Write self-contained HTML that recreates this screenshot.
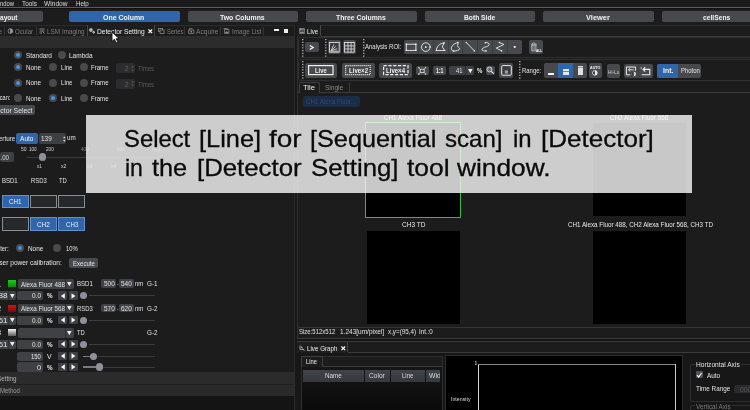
<!DOCTYPE html>
<html><head><meta charset="utf-8"><title>Detector Setting</title>
<style>
html,body{margin:0;padding:0;background:#1c1c1c;}
body{width:750px;height:410px;overflow:hidden;position:relative;font-family:"Liberation Sans",sans-serif;font-size:7px;color:#e4e4e4;}
#root{position:absolute;left:0;top:0;width:750px;height:410px;overflow:hidden;filter:blur(0.4px);will-change:transform;}
.a{position:absolute;}
.t{position:absolute;white-space:nowrap;line-height:10px;height:10px;transform-origin:0 50%;display:block;}
svg{display:block;overflow:visible;}
</style></head><body><div id="root">
<div class="a" style="left:0.00px;top:0.00px;width:750.00px;height:8.00px;background:#1b1b1b;"></div>
<span class="t" style="left:-7.13px;top:-1.17px;font-size:8.0px;color:#dcdcdc;transform:scaleX(0.7425);">Window</span>
<span class="t" style="left:22.00px;top:-1.17px;font-size:8.0px;color:#dcdcdc;transform:scaleX(0.8032);">Tools</span>
<span class="t" style="left:44.30px;top:-1.17px;font-size:8.0px;color:#dcdcdc;transform:scaleX(0.8259);">Window</span>
<span class="t" style="left:75.80px;top:-1.17px;font-size:8.0px;color:#dcdcdc;transform:scaleX(0.7780);">Help</span>
<div class="a" style="left:0.00px;top:7.30px;width:750.00px;height:1.10px;background:#5a5a5a;"></div>
<div class="a" style="left:0.00px;top:8.40px;width:750.00px;height:1.00px;background:#101010;"></div>
<div class="a" style="left:-40.00px;top:11.20px;width:83.20px;height:11.00px;background:#47494d;border-radius:2px;"></div>
<span class="t" style="left:0.00px;top:13.07px;font-size:7.3px;color:#f2f2f2;transform:scaleX(0.8941);font-weight:bold;">ayout</span>
<div class="a" style="left:69.00px;top:11.20px;width:111.00px;height:11.00px;background:#2f66ab;border-radius:2px;"></div>
<span class="t" style="left:103.00px;top:13.07px;font-size:7.3px;color:#f2f2f2;transform:scaleX(0.9522);font-weight:bold;">One Column</span>
<div class="a" style="left:187.50px;top:11.20px;width:110.80px;height:11.00px;background:#47494d;border-radius:2px;"></div>
<span class="t" style="left:220.40px;top:13.07px;font-size:7.3px;color:#f2f2f2;transform:scaleX(0.9452);font-weight:bold;">Two Columns</span>
<div class="a" style="left:306.00px;top:11.20px;width:111.00px;height:11.00px;background:#47494d;border-radius:2px;"></div>
<span class="t" style="left:336.30px;top:13.07px;font-size:7.3px;color:#f2f2f2;transform:scaleX(0.9357);font-weight:bold;">Three Columns</span>
<div class="a" style="left:424.50px;top:11.20px;width:110.80px;height:11.00px;background:#47494d;border-radius:2px;"></div>
<span class="t" style="left:463.90px;top:13.07px;font-size:7.3px;color:#f2f2f2;transform:scaleX(0.9163);font-weight:bold;">Both Side</span>
<div class="a" style="left:543.00px;top:11.20px;width:111.00px;height:11.00px;background:#47494d;border-radius:2px;"></div>
<span class="t" style="left:586.10px;top:13.07px;font-size:7.3px;color:#f2f2f2;transform:scaleX(1.0216);font-weight:bold;">Viewer</span>
<div class="a" style="left:661.50px;top:11.20px;width:110.50px;height:11.00px;background:#47494d;border-radius:2px;"></div>
<span class="t" style="left:703.40px;top:13.07px;font-size:7.3px;color:#f2f2f2;transform:scaleX(0.9186);font-weight:bold;">cellSens</span>
<div class="a" style="left:0.00px;top:24.60px;width:294.00px;height:0.80px;background:#2b2b2b;"></div>
<div class="a" style="left:0.00px;top:35.80px;width:293.60px;height:12.20px;background:#2c2c2c;"></div>
<div class="a" style="left:293.60px;top:25.00px;width:0.80px;height:385.00px;background:#161616;"></div>
<div class="a" style="left:294.40px;top:25.00px;width:1.00px;height:385.00px;background:#2c2c2c;"></div>
<div class="a" style="left:295.40px;top:25.00px;width:1.40px;height:385.00px;background:#181818;"></div>
<div class="a" style="left:296.80px;top:25.00px;width:0.90px;height:385.00px;background:#303030;"></div>
<span class="t" style="left:-2.20px;top:26.77px;font-size:7px;color:#7e7e7e;transform:scaleX(1.0788);">e</span>
<div class="a" style="left:4.30px;top:26.50px;width:1.00px;height:8.50px;background:#343434;"></div>
<span class="t" style="left:15.20px;top:26.77px;font-size:7px;color:#7e7e7e;transform:scaleX(0.8779);">Ocular</span>
<div class="a" style="left:35.50px;top:26.50px;width:1.00px;height:8.50px;background:#343434;"></div>
<span class="t" style="left:47.00px;top:26.77px;font-size:7px;color:#7e7e7e;transform:scaleX(0.9117);">LSM Imaging</span>
<div class="a" style="left:87.00px;top:25.40px;width:68.20px;height:10.40px;background:#1e1e1e;border-left:1px solid #454545;border-right:1px solid #454545;box-sizing:border-box;"></div>
<span class="t" style="left:97.30px;top:26.77px;font-size:7px;color:#ececec;transform:scaleX(0.9503);">Detector Setting</span>
<svg class="a" style="left:148px;top:29.2px" width="4.6" height="4.6" viewBox="0 0 10 10"><path d="M1 1L9 9M9 1L1 9" stroke="#fff" stroke-width="2.6"/></svg>
<span class="t" style="left:166.70px;top:26.77px;font-size:7px;color:#7e7e7e;transform:scaleX(0.8316);">Series</span>
<div class="a" style="left:184.30px;top:26.50px;width:1.00px;height:8.50px;background:#343434;"></div>
<span class="t" style="left:196.00px;top:26.77px;font-size:7px;color:#7e7e7e;transform:scaleX(0.9480);">Acquire</span>
<div class="a" style="left:219.90px;top:26.50px;width:1.00px;height:8.50px;background:#343434;"></div>
<span class="t" style="left:231.50px;top:26.77px;font-size:7px;color:#7e7e7e;transform:scaleX(0.9135);">Image List</span>
<div class="a" style="left:262.50px;top:26.50px;width:1.00px;height:8.50px;background:#343434;"></div>
<div class="a" style="left:273.80px;top:29.30px;width:4.80px;height:1.60px;background:#f0f0f0;"></div>
<div class="a" style="left:284.20px;top:28.60px;width:4.30px;height:4.30px;background:#f0f0f0;"></div>
<svg class="a" style="left:7.4px;top:28px" width="6" height="6" viewBox="0 0 12 12"><path d="M7 1A5 5 0 1 0 7 11Z" fill="none" stroke="#9a9a9a" stroke-width="1.6"/><path d="M7 1A5 5 0 0 1 7 11Z" fill="#9a9a9a"/></svg>
<svg class="a" style="left:39px;top:28px" width="6" height="6" viewBox="0 0 12 12"><path d="M1 2H11M1 6H11M1 10H6M7 7L11 11" stroke="#9a9a9a" stroke-width="1.7" fill="none"/></svg>
<svg class="a" style="left:89px;top:28px" width="6.4" height="6" viewBox="0 0 13 12"><circle cx="4" cy="4" r="2.4" fill="none" stroke="#e8e8e8" stroke-width="2.2"/><circle cx="9.5" cy="8.5" r="1.7" fill="none" stroke="#e8e8e8" stroke-width="2"/></svg>
<svg class="a" style="left:158px;top:28px" width="6.6" height="6" viewBox="0 0 13 12"><rect x="1" y="1" width="8" height="6" fill="none" stroke="#8a8a8a" stroke-width="1.6"/><rect x="4" y="4" width="8" height="7" fill="#1c1c1c" stroke="#8a8a8a" stroke-width="1.6"/></svg>
<svg class="a" style="left:188px;top:28px" width="6.4" height="6" viewBox="0 0 13 12"><path d="M1 4H12V11H1ZM3 4V1H9" fill="none" stroke="#8a8a8a" stroke-width="1.6"/><circle cx="6.5" cy="7.5" r="1.8" fill="#8a8a8a"/></svg>
<svg class="a" style="left:222.8px;top:28px" width="6.4" height="6" viewBox="0 0 13 12"><path d="M1 1H9V3M3 3H12V11H3Z" fill="none" stroke="#8a8a8a" stroke-width="1.6"/><path d="M4 10L7 6L9 8L11 7V10Z" fill="#8a8a8a"/></svg>
<div class="a" style="left:14.00px;top:51.00px;width:8.20px;height:8.20px;background:#4a4a4c;border-radius:50%;"></div>
<div class="a" style="left:16.00px;top:53.00px;width:4.20px;height:4.20px;background:#3d94f2;border-radius:50%;"></div>
<span class="t" style="left:25.80px;top:50.94px;font-size:7.4px;color:#e4e4e4;transform:scaleX(0.8635);">Standard</span>
<div class="a" style="left:57.60px;top:51.00px;width:8.20px;height:8.20px;background:#4a4a4c;border-radius:50%;"></div>
<span class="t" style="left:69.10px;top:50.94px;font-size:7.4px;color:#e4e4e4;transform:scaleX(0.8799);">Lambda</span>
<div class="a" style="left:14.00px;top:63.00px;width:8.20px;height:8.20px;background:#4a4a4c;border-radius:50%;"></div>
<div class="a" style="left:16.00px;top:65.00px;width:4.20px;height:4.20px;background:#3d94f2;border-radius:50%;"></div>
<span class="t" style="left:25.80px;top:62.94px;font-size:7.4px;color:#e4e4e4;transform:scaleX(0.8546);">None</span>
<div class="a" style="left:48.90px;top:63.00px;width:8.20px;height:8.20px;background:#4a4a4c;border-radius:50%;"></div>
<span class="t" style="left:60.70px;top:62.94px;font-size:7.4px;color:#e4e4e4;transform:scaleX(0.8230);">Line</span>
<div class="a" style="left:79.80px;top:63.00px;width:8.20px;height:8.20px;background:#4a4a4c;border-radius:50%;"></div>
<span class="t" style="left:91.40px;top:62.94px;font-size:7.4px;color:#e4e4e4;transform:scaleX(0.8196);">Frame</span>
<div class="a" style="left:116.00px;top:63.10px;width:19.30px;height:10.00px;background:#2c2c2e;border-radius:1.5px;"></div>
<span class="t" style="left:125.00px;top:64.14px;font-size:7.4px;color:#666;transform:scaleX(0.8758);">2</span>
<svg class="a" style="left:131.3px;top:64.8px" width="3" height="7" viewBox="0 0 6 14"><path d="M0 5L3 1L6 5ZM0 9L3 13L6 9Z" fill="#555"/></svg>
<span class="t" style="left:138.00px;top:64.14px;font-size:7.4px;color:#5a5a5a;transform:scaleX(0.8063);">Times</span>
<div class="a" style="left:14.00px;top:78.50px;width:8.20px;height:8.20px;background:#4a4a4c;border-radius:50%;"></div>
<div class="a" style="left:16.00px;top:80.50px;width:4.20px;height:4.20px;background:#3d94f2;border-radius:50%;"></div>
<span class="t" style="left:25.80px;top:78.44px;font-size:7.4px;color:#e4e4e4;transform:scaleX(0.8546);">None</span>
<div class="a" style="left:48.90px;top:78.50px;width:8.20px;height:8.20px;background:#4a4a4c;border-radius:50%;"></div>
<span class="t" style="left:60.70px;top:78.44px;font-size:7.4px;color:#e4e4e4;transform:scaleX(0.8230);">Line</span>
<div class="a" style="left:79.80px;top:78.50px;width:8.20px;height:8.20px;background:#4a4a4c;border-radius:50%;"></div>
<span class="t" style="left:91.40px;top:78.44px;font-size:7.4px;color:#e4e4e4;transform:scaleX(0.8196);">Frame</span>
<div class="a" style="left:116.00px;top:78.60px;width:19.30px;height:10.00px;background:#2c2c2e;border-radius:1.5px;"></div>
<span class="t" style="left:125.00px;top:79.64px;font-size:7.4px;color:#666;transform:scaleX(0.8758);">2</span>
<svg class="a" style="left:131.3px;top:80.3px" width="3" height="7" viewBox="0 0 6 14"><path d="M0 5L3 1L6 5ZM0 9L3 13L6 9Z" fill="#555"/></svg>
<span class="t" style="left:138.00px;top:79.64px;font-size:7.4px;color:#5a5a5a;transform:scaleX(0.8063);">Times</span>
<div class="a" style="left:14.00px;top:93.70px;width:8.20px;height:8.20px;background:#4a4a4c;border-radius:50%;"></div>
<span class="t" style="left:25.80px;top:93.64px;font-size:7.4px;color:#e4e4e4;transform:scaleX(0.8546);">None</span>
<div class="a" style="left:48.90px;top:93.70px;width:8.20px;height:8.20px;background:#4a4a4c;border-radius:50%;"></div>
<div class="a" style="left:50.90px;top:95.70px;width:4.20px;height:4.20px;background:#3d94f2;border-radius:50%;"></div>
<span class="t" style="left:60.70px;top:93.64px;font-size:7.4px;color:#e4e4e4;transform:scaleX(0.8230);">Line</span>
<div class="a" style="left:79.80px;top:93.70px;width:8.20px;height:8.20px;background:#4a4a4c;border-radius:50%;"></div>
<span class="t" style="left:91.40px;top:93.64px;font-size:7.4px;color:#e4e4e4;transform:scaleX(0.8196);">Frame</span>
<span class="t" style="left:-4.40px;top:93.34px;font-size:7.4px;color:#e4e4e4;transform:scaleX(0.7619);">Scan:</span>
<div class="a" style="left:-10.00px;top:104.70px;width:45.20px;height:10.20px;background:#47494d;border-radius:2px;"></div>
<span class="t" style="left:-14.50px;top:105.74px;font-size:7.4px;color:#e4e4e4;transform:scaleX(0.9203);">Detector Select</span>
<span class="t" style="left:-9.40px;top:133.74px;font-size:7.4px;color:#e4e4e4;transform:scaleX(0.8608);">Aperture</span>
<div class="a" style="left:16.40px;top:133.30px;width:21.20px;height:10.70px;background:#2f66ab;border-radius:2px;"></div>
<span class="t" style="left:20.10px;top:134.14px;font-size:7.4px;color:#f4f4f4;transform:scaleX(0.8879);">Auto</span>
<div class="a" style="left:38.70px;top:133.30px;width:27.70px;height:10.70px;background:#3d3f43;border-radius:2px;"></div>
<span class="t" style="left:41.00px;top:134.34px;font-size:7.4px;color:#e4e4e4;transform:scaleX(0.8677);">139</span>
<svg class="a" style="left:63.2px;top:135.6px" width="2.6" height="6.4" viewBox="0 0 6 14"><path d="M0 5L3 1L6 5ZM0 9L3 13L6 9Z" fill="#e8e8e8"/></svg>
<span class="t" style="left:67.10px;top:133.04px;font-size:7.4px;color:#e4e4e4;transform:scaleX(0.8474);">um</span>
<span class="t" style="left:21.20px;top:144.00px;font-size:5.2px;color:#d8d8d8;transform:scaleX(0.9705);">50</span>
<span class="t" style="left:29.30px;top:144.00px;font-size:5.2px;color:#d8d8d8;transform:scaleX(0.8781);">100</span>
<span class="t" style="left:46.30px;top:144.00px;font-size:5.2px;color:#d8d8d8;transform:scaleX(0.8897);">200</span>
<span class="t" style="left:81.20px;top:144.00px;font-size:5.2px;color:#8a8a8a;transform:scaleX(0.9012);">400</span>
<span class="t" style="left:116.50px;top:144.00px;font-size:5.2px;color:#8a8a8a;transform:scaleX(0.9012);">600</span>
<span class="t" style="left:151.50px;top:144.00px;font-size:5.2px;color:#8a8a8a;transform:scaleX(0.9012);">800</span>
<div class="a" style="left:0.00px;top:152.00px;width:13.80px;height:9.70px;background:#3d3f43;border-radius:2px;"></div>
<span class="t" style="left:-2.60px;top:152.54px;font-size:7.4px;color:#d8d8d8;transform:scaleX(0.8342);">1.00</span>
<div class="a" style="left:26.80px;top:156.50px;width:135.20px;height:1.00px;background:#3a3a3a;"></div>
<div class="a" style="left:39.00px;top:153.20px;width:7.40px;height:7.40px;background:#8f9198;border-radius:50%;"></div>
<span class="t" style="left:36.90px;top:161.30px;font-size:5.2px;color:#d8d8d8;transform:scaleX(0.8579);">x1</span>
<span class="t" style="left:61.00px;top:161.30px;font-size:5.2px;color:#d8d8d8;transform:scaleX(0.9856);">x2</span>
<span class="t" style="left:86.60px;top:161.30px;font-size:5.2px;color:#8a8a8a;transform:scaleX(0.9856);">x3</span>
<span class="t" style="left:111.00px;top:161.30px;font-size:5.2px;color:#8a8a8a;transform:scaleX(0.9856);">x4</span>
<span class="t" style="left:2.00px;top:176.34px;font-size:7.4px;color:#e4e4e4;transform:scaleX(0.8132);">BSD1</span>
<span class="t" style="left:30.60px;top:176.34px;font-size:7.4px;color:#e4e4e4;transform:scaleX(0.7964);">RSD3</span>
<span class="t" style="left:59.00px;top:176.34px;font-size:7.4px;color:#e4e4e4;transform:scaleX(0.7918);">TD</span>
<div class="a" style="left:2.00px;top:194.80px;width:26.50px;height:13.40px;background:#2f66ab;box-sizing:border-box;border:1px solid #6390cb;"></div>
<span class="t" style="left:8.70px;top:197.24px;font-size:7.4px;color:#e8f0fb;transform:scaleX(0.8455);">CH1</span>
<div class="a" style="left:30.00px;top:194.80px;width:26.50px;height:13.40px;background:#26292c;box-sizing:border-box;border:1px solid #8c8c8c;"></div>
<div class="a" style="left:58.40px;top:194.80px;width:26.50px;height:13.40px;background:#26292c;box-sizing:border-box;border:1px solid #8c8c8c;"></div>
<div class="a" style="left:2.00px;top:217.40px;width:26.50px;height:13.40px;background:#26292c;box-sizing:border-box;border:1px solid #8c8c8c;"></div>
<div class="a" style="left:30.00px;top:217.40px;width:26.50px;height:13.40px;background:#2f66ab;box-sizing:border-box;border:1px solid #6390cb;"></div>
<span class="t" style="left:37.30px;top:219.84px;font-size:7.4px;color:#e8f0fb;transform:scaleX(0.8590);">CH2</span>
<div class="a" style="left:58.40px;top:217.40px;width:26.50px;height:13.40px;background:#2f66ab;box-sizing:border-box;border:1px solid #6390cb;"></div>
<span class="t" style="left:65.80px;top:219.84px;font-size:7.4px;color:#e8f0fb;transform:scaleX(0.8319);">CH3</span>
<span class="t" style="left:-6.00px;top:244.14px;font-size:7.4px;color:#e4e4e4;transform:scaleX(0.7956);">Filter:</span>
<div class="a" style="left:16.00px;top:244.30px;width:8.20px;height:8.20px;background:#4a4a4c;border-radius:50%;"></div>
<div class="a" style="left:18.00px;top:246.30px;width:4.20px;height:4.20px;background:#3d94f2;border-radius:50%;"></div>
<span class="t" style="left:27.90px;top:244.24px;font-size:7.4px;color:#e4e4e4;transform:scaleX(0.8660);">None</span>
<div class="a" style="left:53.30px;top:244.30px;width:8.20px;height:8.20px;background:#4a4a4c;border-radius:50%;"></div>
<span class="t" style="left:65.50px;top:244.24px;font-size:7.4px;color:#e4e4e4;transform:scaleX(0.7910);">10%</span>
<span class="t" style="left:-7.80px;top:258.34px;font-size:7.4px;color:#e4e4e4;transform:scaleX(0.8896);">Laser power calibration:</span>
<div class="a" style="left:69.10px;top:257.80px;width:29.20px;height:10.40px;background:#47494d;border-radius:2px;"></div>
<span class="t" style="left:73.20px;top:258.74px;font-size:7.4px;color:#e4e4e4;transform:scaleX(0.8163);">Execute</span>
<span class="t" style="left:-3.00px;top:279.74px;font-size:7.4px;color:#e4e4e4;transform:scaleX(1.0218);">1</span>
<div class="a" style="left:8.10px;top:280.00px;width:7.70px;height:7.20px;background:linear-gradient(#18d018,#0a8a0a);"></div>
<div class="a" style="left:18.10px;top:279.00px;width:55.50px;height:9.50px;background:#3f4145;border-radius:2px;"></div>
<div class="a" style="left:65.30px;top:279.00px;width:0.60px;height:9.50px;background:#2c2e31;"></div>
<svg class="a" style="left:67.3px;top:281.8px" width="4.6" height="4.2" viewBox="0 0 10 9"><path d="M0 0H10L5 9Z" fill="#f2f2f2"/></svg>
<span class="t" style="left:20.80px;top:279.59px;font-size:7.4px;color:#e4e4e4;transform:scaleX(0.8481);">Alexa Fluor 488</span>
<span class="t" style="left:76.80px;top:279.24px;font-size:7.4px;color:#e4e4e4;transform:scaleX(0.8184);">BSD1</span>
<div class="a" style="left:101.20px;top:279.00px;width:14.80px;height:8.90px;background:#3f4145;border-radius:2px;"></div>
<span class="t" style="left:103.50px;top:279.24px;font-size:7.4px;color:#e4e4e4;transform:scaleX(0.8677);">500</span>
<span class="t" style="left:117.20px;top:279.24px;font-size:7.4px;color:#e4e4e4;transform:scaleX(0.5688);">-</span>
<div class="a" style="left:118.90px;top:279.00px;width:15.10px;height:8.90px;background:#3f4145;border-radius:2px;"></div>
<span class="t" style="left:121.20px;top:279.24px;font-size:7.4px;color:#e4e4e4;transform:scaleX(0.8758);">540</span>
<span class="t" style="left:134.50px;top:279.24px;font-size:7.4px;color:#e4e4e4;transform:scaleX(0.8084);">nm</span>
<span class="t" style="left:146.70px;top:279.24px;font-size:7.4px;color:#e4e4e4;transform:scaleX(0.8523);">G-1</span>
<div class="a" style="left:-8.00px;top:290.90px;width:23.80px;height:9.20px;background:#3f4145;border-radius:2px;"></div>
<div class="a" style="left:7.90px;top:290.90px;width:0.60px;height:9.20px;background:#2c2e31;"></div>
<span class="t" style="left:-6.30px;top:291.34px;font-size:7.4px;color:#e4e4e4;transform:scaleX(1.0948);">488</span>
<svg class="a" style="left:10px;top:293.5px" width="4.6" height="4.2" viewBox="0 0 10 9"><path d="M0 0H10L5 9Z" fill="#f2f2f2"/></svg>
<div class="a" style="left:17.20px;top:290.90px;width:25.80px;height:9.20px;background:#3f4145;border-radius:2px;"></div>
<span class="t" style="left:32.00px;top:291.34px;font-size:7.4px;color:#e4e4e4;transform:scaleX(0.8760);">0.0</span>
<span class="t" style="left:47.00px;top:291.34px;font-size:7.4px;color:#e8e8e8;transform:scaleX(0.8522);font-weight:bold;">%</span>
<div class="a" style="left:58.00px;top:291.40px;width:9.00px;height:8.20px;background:#3e4044;border-radius:1px;"></div>
<svg class="a" style="left:59.6px;top:292.5px" width="6" height="6" viewBox="0 0 10 10"><path d="M8 0.5V9.5L1.5 5Z" fill="#f6f6f6"/></svg>
<div class="a" style="left:68.70px;top:291.40px;width:9.00px;height:8.20px;background:#3e4044;border-radius:1px;"></div>
<svg class="a" style="left:70.3px;top:292.5px" width="6" height="6" viewBox="0 0 10 10"><path d="M2.5 0.5V9.5L9 5Z" fill="#f6f6f6"/></svg>
<div class="a" style="left:88.70px;top:295.00px;width:66.50px;height:1.00px;background:#3c3c3c;"></div>
<div class="a" style="left:79.80px;top:291.80px;width:7.40px;height:7.40px;background:#8f9198;border-radius:50%;"></div>
<span class="t" style="left:-3.00px;top:304.24px;font-size:7.4px;color:#e4e4e4;transform:scaleX(1.0218);">2</span>
<div class="a" style="left:8.10px;top:304.50px;width:7.70px;height:7.30px;background:linear-gradient(#e01010,#7a0808);"></div>
<div class="a" style="left:18.10px;top:303.50px;width:55.50px;height:9.70px;background:#3f4145;border-radius:2px;"></div>
<div class="a" style="left:65.30px;top:303.50px;width:0.60px;height:9.70px;background:#2c2e31;"></div>
<svg class="a" style="left:67.3px;top:306.4px" width="4.6" height="4.2" viewBox="0 0 10 9"><path d="M0 0H10L5 9Z" fill="#f2f2f2"/></svg>
<span class="t" style="left:20.80px;top:304.19px;font-size:7.4px;color:#e4e4e4;transform:scaleX(0.8481);">Alexa Fluor 568</span>
<span class="t" style="left:76.80px;top:303.84px;font-size:7.4px;color:#e4e4e4;transform:scaleX(0.8015);">RSD3</span>
<div class="a" style="left:101.20px;top:303.60px;width:14.80px;height:8.90px;background:#3f4145;border-radius:2px;"></div>
<span class="t" style="left:103.50px;top:303.84px;font-size:7.4px;color:#e4e4e4;transform:scaleX(0.8677);">570</span>
<span class="t" style="left:117.20px;top:303.84px;font-size:7.4px;color:#e4e4e4;transform:scaleX(0.5688);">-</span>
<div class="a" style="left:118.90px;top:303.60px;width:15.10px;height:8.90px;background:#3f4145;border-radius:2px;"></div>
<span class="t" style="left:121.20px;top:303.84px;font-size:7.4px;color:#e4e4e4;transform:scaleX(0.8758);">620</span>
<span class="t" style="left:134.50px;top:303.84px;font-size:7.4px;color:#e4e4e4;transform:scaleX(0.8084);">nm</span>
<span class="t" style="left:146.70px;top:303.84px;font-size:7.4px;color:#e4e4e4;transform:scaleX(0.8523);">G-2</span>
<div class="a" style="left:-8.00px;top:315.60px;width:23.80px;height:9.20px;background:#3f4145;border-radius:2px;"></div>
<div class="a" style="left:7.90px;top:315.60px;width:0.60px;height:9.20px;background:#2c2e31;"></div>
<span class="t" style="left:-6.30px;top:316.04px;font-size:7.4px;color:#e4e4e4;transform:scaleX(1.0948);">561</span>
<svg class="a" style="left:10px;top:318.2px" width="4.6" height="4.2" viewBox="0 0 10 9"><path d="M0 0H10L5 9Z" fill="#f2f2f2"/></svg>
<div class="a" style="left:17.20px;top:315.60px;width:25.80px;height:9.20px;background:#3f4145;border-radius:2px;"></div>
<span class="t" style="left:32.00px;top:316.04px;font-size:7.4px;color:#e4e4e4;transform:scaleX(0.8760);">0.0</span>
<span class="t" style="left:47.00px;top:316.04px;font-size:7.4px;color:#e8e8e8;transform:scaleX(0.8522);font-weight:bold;">%</span>
<div class="a" style="left:58.00px;top:316.10px;width:9.00px;height:8.20px;background:#3e4044;border-radius:1px;"></div>
<svg class="a" style="left:59.6px;top:317.2px" width="6" height="6" viewBox="0 0 10 10"><path d="M8 0.5V9.5L1.5 5Z" fill="#f6f6f6"/></svg>
<div class="a" style="left:68.70px;top:316.10px;width:9.00px;height:8.20px;background:#3e4044;border-radius:1px;"></div>
<svg class="a" style="left:70.3px;top:317.2px" width="6" height="6" viewBox="0 0 10 10"><path d="M2.5 0.5V9.5L9 5Z" fill="#f6f6f6"/></svg>
<div class="a" style="left:88.70px;top:319.70px;width:66.50px;height:1.00px;background:#3c3c3c;"></div>
<div class="a" style="left:79.80px;top:316.50px;width:7.40px;height:7.40px;background:#8f9198;border-radius:50%;"></div>
<span class="t" style="left:-3.00px;top:328.14px;font-size:7.4px;color:#e4e4e4;transform:scaleX(1.0218);">3</span>
<div class="a" style="left:8.10px;top:329.00px;width:7.70px;height:7.30px;background:linear-gradient(#f4f4f4,#5a5a5a);"></div>
<div class="a" style="left:18.10px;top:327.70px;width:55.50px;height:9.90px;background:#3f4145;border-radius:2px;"></div>
<div class="a" style="left:65.30px;top:327.70px;width:0.60px;height:9.90px;background:#2c2e31;"></div>
<svg class="a" style="left:67.3px;top:330.6px" width="4.6" height="4.2" viewBox="0 0 10 9"><path d="M0 0H10L5 9Z" fill="#f2f2f2"/></svg>
<span class="t" style="left:76.80px;top:328.14px;font-size:7.4px;color:#e4e4e4;transform:scaleX(0.7918);">TD</span>
<span class="t" style="left:146.70px;top:328.14px;font-size:7.4px;color:#e4e4e4;transform:scaleX(0.8523);">G-2</span>
<div class="a" style="left:-8.00px;top:339.80px;width:23.80px;height:9.20px;background:#3f4145;border-radius:2px;"></div>
<div class="a" style="left:7.90px;top:339.80px;width:0.60px;height:9.20px;background:#2c2e31;"></div>
<span class="t" style="left:-6.30px;top:340.24px;font-size:7.4px;color:#e4e4e4;transform:scaleX(1.0948);">561</span>
<svg class="a" style="left:10px;top:342.4px" width="4.6" height="4.2" viewBox="0 0 10 9"><path d="M0 0H10L5 9Z" fill="#f2f2f2"/></svg>
<div class="a" style="left:17.20px;top:339.80px;width:25.80px;height:9.20px;background:#3f4145;border-radius:2px;"></div>
<span class="t" style="left:32.00px;top:340.24px;font-size:7.4px;color:#e4e4e4;transform:scaleX(0.8760);">0.0</span>
<span class="t" style="left:47.00px;top:340.24px;font-size:7.4px;color:#e8e8e8;transform:scaleX(0.8522);font-weight:bold;">%</span>
<div class="a" style="left:58.00px;top:340.30px;width:9.00px;height:8.20px;background:#3e4044;border-radius:1px;"></div>
<svg class="a" style="left:59.6px;top:341.4px" width="6" height="6" viewBox="0 0 10 10"><path d="M8 0.5V9.5L1.5 5Z" fill="#f6f6f6"/></svg>
<div class="a" style="left:68.70px;top:340.30px;width:9.00px;height:8.20px;background:#3e4044;border-radius:1px;"></div>
<svg class="a" style="left:70.3px;top:341.4px" width="6" height="6" viewBox="0 0 10 10"><path d="M2.5 0.5V9.5L9 5Z" fill="#f6f6f6"/></svg>
<div class="a" style="left:88.70px;top:343.90px;width:66.50px;height:1.00px;background:#3c3c3c;"></div>
<div class="a" style="left:79.80px;top:340.70px;width:7.40px;height:7.40px;background:#8f9198;border-radius:50%;"></div>
<div class="a" style="left:17.20px;top:351.70px;width:25.80px;height:9.20px;background:#3f4145;border-radius:2px;"></div>
<span class="t" style="left:31.10px;top:352.14px;font-size:7.4px;color:#e4e4e4;transform:scaleX(0.8029);">150</span>
<span class="t" style="left:47.20px;top:352.14px;font-size:7.4px;color:#e8e8e8;transform:scaleX(0.9332);">V</span>
<div class="a" style="left:58.00px;top:352.20px;width:9.00px;height:8.20px;background:#3e4044;border-radius:1px;"></div>
<svg class="a" style="left:59.6px;top:353.3px" width="6" height="6" viewBox="0 0 10 10"><path d="M8 0.5V9.5L1.5 5Z" fill="#f6f6f6"/></svg>
<div class="a" style="left:68.70px;top:352.20px;width:9.00px;height:8.20px;background:#3e4044;border-radius:1px;"></div>
<svg class="a" style="left:70.3px;top:353.3px" width="6" height="6" viewBox="0 0 10 10"><path d="M2.5 0.5V9.5L9 5Z" fill="#f6f6f6"/></svg>
<div class="a" style="left:83.20px;top:355.70px;width:10.50px;height:1.20px;background:#7c7c7c;"></div>
<div class="a" style="left:93.70px;top:355.80px;width:61.50px;height:1.00px;background:#3c3c3c;"></div>
<div class="a" style="left:90.00px;top:352.60px;width:7.40px;height:7.40px;background:#8f9198;border-radius:50%;"></div>
<div class="a" style="left:17.20px;top:362.40px;width:25.80px;height:9.20px;background:#3f4145;border-radius:2px;"></div>
<span class="t" style="left:36.90px;top:362.84px;font-size:7.4px;color:#e4e4e4;transform:scaleX(0.9975);">0</span>
<span class="t" style="left:47.00px;top:362.84px;font-size:7.4px;color:#e8e8e8;transform:scaleX(0.8522);font-weight:bold;">%</span>
<div class="a" style="left:58.00px;top:362.90px;width:9.00px;height:8.20px;background:#3e4044;border-radius:1px;"></div>
<svg class="a" style="left:59.6px;top:364.0px" width="6" height="6" viewBox="0 0 10 10"><path d="M8 0.5V9.5L1.5 5Z" fill="#f6f6f6"/></svg>
<div class="a" style="left:68.70px;top:362.90px;width:9.00px;height:8.20px;background:#3e4044;border-radius:1px;"></div>
<svg class="a" style="left:70.3px;top:364.0px" width="6" height="6" viewBox="0 0 10 10"><path d="M2.5 0.5V9.5L9 5Z" fill="#f6f6f6"/></svg>
<div class="a" style="left:83.20px;top:366.40px;width:16.30px;height:1.20px;background:#7c7c7c;"></div>
<div class="a" style="left:99.50px;top:366.50px;width:55.70px;height:1.00px;background:#3c3c3c;"></div>
<div class="a" style="left:95.80px;top:363.30px;width:7.40px;height:7.40px;background:#8f9198;border-radius:50%;"></div>
<div class="a" style="left:0.00px;top:372.40px;width:293.60px;height:11.20px;background:#2b2b2b;"></div>
<div class="a" style="left:0.00px;top:383.60px;width:293.60px;height:0.90px;background:#202020;"></div>
<div class="a" style="left:0.00px;top:384.50px;width:293.60px;height:11.50px;background:#2a2a2a;"></div>
<div class="a" style="left:0.00px;top:396.00px;width:293.60px;height:14.00px;background:#141414;"></div>
<span class="t" style="left:-3.50px;top:373.74px;font-size:7.4px;color:#b4b4b4;transform:scaleX(0.8518);">Setting</span>
<span class="t" style="left:0.00px;top:385.74px;font-size:7.4px;color:#9c9c9c;transform:scaleX(0.8073);">Method</span>
<div class="a" style="left:297.40px;top:24.60px;width:452.60px;height:0.80px;background:#2b2b2b;"></div>
<div class="a" style="left:297.40px;top:25.40px;width:23.40px;height:10.60px;background:#1e1e1e;border-right:1px solid #454545;box-sizing:border-box;"></div>
<div class="a" style="left:320.80px;top:35.50px;width:429.20px;height:0.90px;background:#3a3a3a;"></div>
<svg class="a" style="left:299px;top:27.8px" width="6" height="6" viewBox="0 0 12 12"><rect x="0.5" y="0.5" width="11" height="11" fill="#8d9096"/><path d="M2 9L4 4L6 8L8 3L10 9" stroke="#2a2a2a" stroke-width="1.4" fill="none"/></svg>
<span class="t" style="left:307.20px;top:26.77px;font-size:7px;color:#ececec;transform:scaleX(0.8800);">Live</span>
<div class="a" style="left:298.30px;top:36.60px;width:461.70px;height:21.00px;background:transparent;border:1px solid #303030;border-radius:2.5px;box-sizing:border-box;"></div>
<div class="a" style="left:298.30px;top:59.20px;width:461.70px;height:21.60px;background:transparent;border:1px solid #303030;border-radius:2.5px;box-sizing:border-box;"></div>
<svg class="a" style="left:301.5px;top:38.5px" width="1.8" height="18.0"><rect x="0" y="0.00" width="1.5" height="1.2" fill="#a8a8a8"/><rect x="0" y="2.75" width="1.5" height="1.2" fill="#a8a8a8"/><rect x="0" y="5.50" width="1.5" height="1.2" fill="#a8a8a8"/><rect x="0" y="8.25" width="1.5" height="1.2" fill="#a8a8a8"/><rect x="0" y="11.00" width="1.5" height="1.2" fill="#a8a8a8"/><rect x="0" y="13.75" width="1.5" height="1.2" fill="#a8a8a8"/><rect x="0" y="16.50" width="1.5" height="1.2" fill="#a8a8a8"/></svg>
<svg class="a" style="left:324.6px;top:38.5px" width="1.8" height="18.0"><rect x="0" y="0.00" width="1.5" height="1.2" fill="#a8a8a8"/><rect x="0" y="2.75" width="1.5" height="1.2" fill="#a8a8a8"/><rect x="0" y="5.50" width="1.5" height="1.2" fill="#a8a8a8"/><rect x="0" y="8.25" width="1.5" height="1.2" fill="#a8a8a8"/><rect x="0" y="11.00" width="1.5" height="1.2" fill="#a8a8a8"/><rect x="0" y="13.75" width="1.5" height="1.2" fill="#a8a8a8"/><rect x="0" y="16.50" width="1.5" height="1.2" fill="#a8a8a8"/></svg>
<svg class="a" style="left:362.6px;top:38.5px" width="1.8" height="18.0"><rect x="0" y="0.00" width="1.5" height="1.2" fill="#a8a8a8"/><rect x="0" y="2.75" width="1.5" height="1.2" fill="#a8a8a8"/><rect x="0" y="5.50" width="1.5" height="1.2" fill="#a8a8a8"/><rect x="0" y="8.25" width="1.5" height="1.2" fill="#a8a8a8"/><rect x="0" y="11.00" width="1.5" height="1.2" fill="#a8a8a8"/><rect x="0" y="13.75" width="1.5" height="1.2" fill="#a8a8a8"/><rect x="0" y="16.50" width="1.5" height="1.2" fill="#a8a8a8"/></svg>
<div class="a" style="left:304.90px;top:41.90px;width:13.70px;height:10.00px;background:#47494d;border-radius:2px;"></div>
<svg class="a" style="left:308.9px;top:44.5px" width="5" height="5" viewBox="0 0 10 10"><path d="M1.5 1L8.5 5L1.5 9" stroke="#fff" stroke-width="2.4" fill="none"/></svg>
<div class="a" style="left:327.70px;top:40.30px;width:13.60px;height:13.50px;background:#47494d;border-radius:2px;"></div>
<svg class="a" style="left:329.2px;top:41.8px" width="10.8" height="10.6" viewBox="0 0 22 22"><rect x="1" y="1" width="20" height="20" fill="#3a3c40" stroke="#e6e6e6" stroke-width="1.8"/><path d="M4 18L10 5M4 18L14 9M4 18L17 14M3 19H19" stroke="#e6e6e6" stroke-width="1.6" fill="none"/></svg>
<div class="a" style="left:342.90px;top:40.30px;width:13.30px;height:13.50px;background:#47494d;border-radius:2px;"></div>
<svg class="a" style="left:344.3px;top:41.8px" width="10.8" height="10.6" viewBox="0 0 22 22"><rect x="1" y="1" width="20" height="20" fill="#3a3c40" stroke="#e6e6e6" stroke-width="1.8"/><path d="M8 1V21M14.5 1V21M1 8H21M1 14.5H21" stroke="#e6e6e6" stroke-width="1.6"/></svg>
<span class="t" style="left:365.10px;top:42.41px;font-size:7.2px;color:#e4e4e4;transform:scaleX(0.8361);">Analysis ROI:</span>
<div class="a" style="left:403.90px;top:40.10px;width:117.90px;height:13.80px;background:#47494d;border-radius:2px;"></div>
<div class="a" style="left:418.24px;top:40.10px;width:0.80px;height:13.80px;background:#3a3c40;"></div>
<div class="a" style="left:432.98px;top:40.10px;width:0.80px;height:13.80px;background:#3a3c40;"></div>
<div class="a" style="left:447.72px;top:40.10px;width:0.80px;height:13.80px;background:#3a3c40;"></div>
<div class="a" style="left:462.46px;top:40.10px;width:0.80px;height:13.80px;background:#3a3c40;"></div>
<div class="a" style="left:477.20px;top:40.10px;width:0.80px;height:13.80px;background:#3a3c40;"></div>
<div class="a" style="left:491.94px;top:40.10px;width:0.80px;height:13.80px;background:#3a3c40;"></div>
<div class="a" style="left:506.68px;top:40.10px;width:0.80px;height:13.80px;background:#3a3c40;"></div>
<svg class="a" style="left:403.9px;top:40.1px" width="118" height="13.8" viewBox="403.9 40.1 118 13.8">
<rect x="406.2" y="44.3" width="9.6" height="6.2" stroke="#ececec" stroke-width="0.9" fill="none"/>
<g fill="#fff"><rect x="405.6" y="43.7" width="1.3" height="1.3"/><rect x="415.1" y="43.7" width="1.3" height="1.3"/><rect x="405.6" y="49.8" width="1.3" height="1.3"/><rect x="415.1" y="49.8" width="1.3" height="1.3"/></g>
<circle cx="425.7" cy="47.2" r="4.3" stroke="#ececec" stroke-width="0.9" fill="none"/><circle cx="425.7" cy="47.2" r="0.9" fill="#fff"/><rect x="429.4" y="46.6" width="1.2" height="1.2" fill="#fff"/>
<path d="M436.2 50.6C436.6 47 439 43.6 444 43L442.2 47L444.6 50.6Z" stroke="#ececec" stroke-width="0.9" fill="none"/>
<g fill="#fff"><rect x="435.6" y="50" width="1.2" height="1.2"/><rect x="443.4" y="42.4" width="1.2" height="1.2"/><rect x="444" y="50" width="1.2" height="1.2"/></g>
<path d="M457.8 42.6C453.6 43.6 451 46.4 451.2 48.8C451.4 50.6 452.4 51.3 453.6 51.2C456 51 459.4 50.4 459.6 48.8C459.7 47.6 457.2 47.2 457.4 45.8C457.5 44.8 458.4 43.8 457.8 42.6Z" stroke="#ececec" stroke-width="0.9" fill="none"/>
<g fill="#fff"><rect x="457.2" y="42" width="1.2" height="1.2"/><rect x="453" y="50.6" width="1.2" height="1.2"/></g>
<path d="M466.2 42.6L474.3 51" stroke="#ececec" stroke-width="0.9" fill="none"/><rect x="473.7" y="50.4" width="1.2" height="1.2" fill="#fff"/><rect x="465.6" y="42" width="1.2" height="1.2" fill="#fff"/>
<path d="M485 42.8C490 41.9 490.2 45.9 486.6 46.7C481 47.8 480 51.7 486 51" stroke="#ececec" stroke-width="0.9" fill="none"/><rect x="485.4" y="50.4" width="1.2" height="1.2" fill="#fff"/><rect x="484.6" y="42.2" width="1.2" height="1.2" fill="#fff"/>
<path d="M499.2 42.6L503.8 44.6L496.2 48.2L501.6 51" stroke="#ececec" stroke-width="0.9" fill="none"/><rect x="501" y="50.4" width="1.2" height="1.2" fill="#fff"/><rect x="498.6" y="42" width="1.2" height="1.2" fill="#fff"/>
<rect x="513.7" y="46.1" width="1.8" height="1.8" fill="#fff"/>
</svg>
<div class="a" style="left:529.40px;top:40.20px;width:13.40px;height:13.60px;background:#47494d;border-radius:2px;"></div>
<svg class="a" style="left:529.4px;top:40.2px" width="13.4" height="13.6" viewBox="529.4 40.2 13.4 13.6">
<path d="M531.2 44.6H537.2M532.6 44.4L533 43.2H535.4L535.8 44.4" stroke="#b8b8b8" stroke-width="0.8" fill="none"/>
<path d="M531.8 45.4H536.6L536.2 51.2H532.2Z" fill="#8a8c90" stroke="#c0c0c0" stroke-width="0.6"/>
<path d="M533.2 46.2V50.4M534.2 46.2V50.4M535.2 46.2V50.4" stroke="#444" stroke-width="0.4"/>
</svg>
<span class="t" style="left:536.20px;top:46.38px;font-size:3.8px;color:#ffffff;transform:scaleX(0.8400);font-weight:bold;">ALL</span>
<svg class="a" style="left:301.5px;top:61.4px" width="1.8" height="18.0"><rect x="0" y="0.00" width="1.5" height="1.2" fill="#a8a8a8"/><rect x="0" y="2.75" width="1.5" height="1.2" fill="#a8a8a8"/><rect x="0" y="5.50" width="1.5" height="1.2" fill="#a8a8a8"/><rect x="0" y="8.25" width="1.5" height="1.2" fill="#a8a8a8"/><rect x="0" y="11.00" width="1.5" height="1.2" fill="#a8a8a8"/><rect x="0" y="13.75" width="1.5" height="1.2" fill="#a8a8a8"/><rect x="0" y="16.50" width="1.5" height="1.2" fill="#a8a8a8"/></svg>
<svg class="a" style="left:519.3px;top:61.4px" width="1.8" height="18.0"><rect x="0" y="0.00" width="1.5" height="1.2" fill="#a8a8a8"/><rect x="0" y="2.75" width="1.5" height="1.2" fill="#a8a8a8"/><rect x="0" y="5.50" width="1.5" height="1.2" fill="#a8a8a8"/><rect x="0" y="8.25" width="1.5" height="1.2" fill="#a8a8a8"/><rect x="0" y="11.00" width="1.5" height="1.2" fill="#a8a8a8"/><rect x="0" y="13.75" width="1.5" height="1.2" fill="#a8a8a8"/><rect x="0" y="16.50" width="1.5" height="1.2" fill="#a8a8a8"/></svg>
<div class="a" style="left:304.60px;top:63.00px;width:32.80px;height:14.80px;background:#47494d;border-radius:2.5px;"></div>
<svg class="a" style="left:307.2px;top:64.4px" width="27.6" height="12.4"><rect x="1.6" y="1.6" width="24.4" height="9" fill="none" stroke="#f0f0f0" stroke-width="1.2" /></svg>
<span class="t" style="left:315.40px;top:66.34px;font-size:6.8px;color:#f0f0f0;transform:scaleX(0.8529);font-weight:bold;">Live</span>
<div class="a" style="left:341.90px;top:63.00px;width:32.70px;height:14.80px;background:#47494d;border-radius:2.5px;"></div>
<svg class="a" style="left:344.2px;top:64.4px" width="27.8" height="12.4"><rect x="1.6" y="1.6" width="24.6" height="9" fill="none" stroke="#f0f0f0" stroke-width="1.2" stroke-dasharray="1.1 0.9"/></svg>
<span class="t" style="left:348.80px;top:66.34px;font-size:6.8px;color:#f0f0f0;transform:scaleX(0.8899);font-weight:bold;">Live×2</span>
<div class="a" style="left:379.00px;top:63.00px;width:32.80px;height:14.80px;background:#47494d;border-radius:2.5px;"></div>
<svg class="a" style="left:381.6px;top:64.4px" width="27.6" height="12.4"><rect x="1.6" y="1.6" width="24.4" height="9" fill="none" stroke="#f0f0f0" stroke-width="1.2" stroke-dasharray="3.2 1.6"/></svg>
<span class="t" style="left:386.20px;top:66.34px;font-size:6.8px;color:#f0f0f0;transform:scaleX(0.8899);font-weight:bold;">Live×4</span>
<div class="a" style="left:416.20px;top:65.80px;width:12.40px;height:9.40px;background:#47494d;border-radius:2px;"></div>
<svg class="a" style="left:418.2px;top:66.6px" width="8.4" height="7.8" viewBox="0 0 17 16"><rect x="4.5" y="4.5" width="8" height="7" fill="none" stroke="#eee" stroke-width="1.6"/><path d="M1 1L4 4M16 1L13 4M1 15L4 12M16 15L13 12M1 3V1H3M14 1H16V3M1 13V15H3M14 15H16V13" stroke="#eee" stroke-width="1.4" fill="none"/></svg>
<div class="a" style="left:433.00px;top:65.80px;width:12.60px;height:9.40px;background:#47494d;border-radius:2px;"></div>
<span class="t" style="left:435.80px;top:66.28px;font-size:6.4px;color:#f0f0f0;transform:scaleX(0.7795);font-weight:bold;">1:1</span>
<div class="a" style="left:449.00px;top:65.80px;width:24.90px;height:9.60px;background:#3f4145;border-radius:2px;"></div>
<div class="a" style="left:465.10px;top:65.80px;width:0.60px;height:9.60px;background:#2c2e31;"></div>
<span class="t" style="left:456.40px;top:66.41px;font-size:7.2px;color:#e4e4e4;transform:scaleX(0.8005);">41</span>
<svg class="a" style="left:467.7px;top:68.6px" width="4.6" height="4.2" viewBox="0 0 10 9"><path d="M0 0H10L5 9Z" fill="#f2f2f2"/></svg>
<span class="t" style="left:477.20px;top:66.41px;font-size:7.2px;color:#e8e8e8;transform:scaleX(0.8450);font-weight:bold;">%</span>
<div class="a" style="left:485.60px;top:65.80px;width:9.60px;height:9.60px;background:#47494d;border-radius:2px;"></div>
<svg class="a" style="left:486.4px;top:66.4px" width="8.4" height="8.4" viewBox="0 0 17 17"><circle cx="7" cy="7" r="5" fill="none" stroke="#eee" stroke-width="1.7"/><path d="M10.8 10.8L15.5 15.5" stroke="#eee" stroke-width="2.4"/><circle cx="7" cy="7" r="2.2" fill="none" stroke="#bbb" stroke-width="1.2"/></svg>
<div class="a" style="left:499.00px;top:63.40px;width:14.00px;height:14.40px;background:#47494d;border-radius:2px;"></div>
<svg class="a" style="left:500.6px;top:65.2px" width="11" height="10.8" viewBox="0 0 22 22"><rect x="1.2" y="1.2" width="19.6" height="19.6" rx="2" fill="#3a3c40" stroke="#eee" stroke-width="2"/><rect x="7.5" y="11" width="6.5" height="6.5" fill="#9a9c9f"/></svg>
<span class="t" style="left:521.60px;top:66.41px;font-size:7.2px;color:#e4e4e4;transform:scaleX(0.8284);">Range:</span>
<div class="a" style="left:543.80px;top:63.40px;width:43.50px;height:14.40px;background:#47494d;border-radius:2px;"></div>
<div class="a" style="left:558.20px;top:63.40px;width:14.40px;height:14.40px;background:#2f66ab;"></div>
<div class="a" style="left:548.00px;top:73.00px;width:6.20px;height:1.90px;background:#f4f4f4;"></div>
<div class="a" style="left:563.00px;top:69.40px;width:5.50px;height:5.50px;background:#dfe9f7;"></div>
<div class="a" style="left:563.00px;top:70.70px;width:5.50px;height:0.40px;background:#5f8cc8;"></div>
<div class="a" style="left:578.00px;top:66.20px;width:5.30px;height:8.70px;background:repeating-linear-gradient(#e0e0e0 0 1.4px,#9a9a9a 1.4px 2.1px);"></div>
<div class="a" style="left:588.80px;top:63.40px;width:13.40px;height:14.40px;background:#47494d;border-radius:2px;"></div>
<span class="t" style="left:590.40px;top:63.32px;font-size:3.7px;color:#f0f0f0;transform:scaleX(1.0019);font-weight:bold;">AUTO</span>
<svg class="a" style="left:592.4px;top:70.2px" width="5.8" height="5.8" viewBox="0 0 12 12"><circle cx="6" cy="6" r="4.8" fill="#222" stroke="#f4f4f4" stroke-width="1.8"/><path d="M6 1.2A4.8 4.8 0 0 1 6 10.8Z" fill="#f4f4f4"/></svg>
<div class="a" style="left:606.60px;top:63.60px;width:13.60px;height:14.00px;background:#47494d;border-radius:2px;"></div>
<span class="t" style="left:607.80px;top:66.56px;font-size:5.6px;color:#cfcfcf;transform:scaleX(0.8528);">Hi-Lo</span>
<div class="a" style="left:624.20px;top:63.60px;width:28.60px;height:14.00px;background:#47494d;border-radius:2px;"></div>
<div class="a" style="left:638.10px;top:63.60px;width:0.60px;height:14.00px;background:#3a3c40;"></div>
<svg class="a" style="left:624.2px;top:63.6px" width="28.6" height="14" viewBox="624.2 63.6 28.6 14">
<path d="M626.6 66.6H635.6V70.4M626.6 66.6V74.4H630.4" stroke="#eee" stroke-width="1" fill="none"/>
<path d="M633.8 69.4H628.8M630.4 67.8L628.6 69.4L630.4 71" stroke="#eee" stroke-width="0.9" fill="none"/>
<circle cx="634" cy="73.6" r="2.2" fill="#ddd"/><path d="M634 71.4A2.2 2.2 0 0 0 634 75.8Z" fill="#333"/>
<path d="M643.6 69H650V74.4H642" stroke="#eee" stroke-width="1.1" fill="none"/>
<path d="M645.4 66.8L643.2 69L645.4 71.2" stroke="#eee" stroke-width="1.1" fill="none"/>
<rect x="640.8" y="67" width="1.2" height="1.2" fill="#eee"/>
</svg>
<div class="a" style="left:656.90px;top:63.60px;width:44.60px;height:14.00px;background:#47494d;border-radius:2px;"></div>
<div class="a" style="left:656.90px;top:63.60px;width:21.50px;height:14.00px;background:#2f66ab;border-radius:2px 0 0 2px;"></div>
<span class="t" style="left:663.00px;top:66.48px;font-size:6.4px;color:#f0f0f0;transform:scaleX(1.0853);font-weight:bold;">Int.</span>
<span class="t" style="left:681.00px;top:66.48px;font-size:6.4px;color:#e8e8e8;transform:scaleX(0.9232);">Photon</span>
<div class="a" style="left:298.30px;top:92.00px;width:451.70px;height:0.90px;background:#3a3a3a;"></div>
<div class="a" style="left:299.00px;top:82.40px;width:21.40px;height:10.50px;background:#1c1c1c;border:1px solid #3f3f3f;border-bottom:none;box-sizing:border-box;border-radius:2px 2px 0 0;"></div>
<div class="a" style="left:320.40px;top:83.40px;width:29.40px;height:9.00px;background:#1c1c1c;border-right:1px solid #3a3a3a;box-sizing:border-box;"></div>
<span class="t" style="left:303.20px;top:82.81px;font-size:7.2px;color:#f0f0f0;transform:scaleX(1.0605);">Tile</span>
<span class="t" style="left:325.40px;top:82.81px;font-size:7.2px;color:#8a8a8a;transform:scaleX(0.9109);">Single</span>
<div class="a" style="left:303.40px;top:96.20px;width:56.40px;height:10.40px;background:#1b2c46;border-radius:2px;"></div>
<span class="t" style="left:306.40px;top:97.11px;font-size:7.2px;color:#314a6c;transform:scaleX(0.8632);">CH1 Alexa Fluor...</span>
<span class="t" style="left:384.20px;top:113.01px;font-size:6.6px;color:#e8e8e8;transform:scaleX(0.9516);">CH1 Alexa Fluor 488</span>
<span class="t" style="left:610.40px;top:113.01px;font-size:6.6px;color:#e8e8e8;transform:scaleX(0.9566);">CH2 Alexa Fluor 568</span>
<div class="a" style="left:365.40px;top:122.00px;width:95.80px;height:95.60px;background:#000;box-sizing:border-box;border:1.6px solid #30bc3c;"></div>
<div class="a" style="left:592.80px;top:123.20px;width:93.10px;height:92.60px;background:#000;"></div>
<span class="t" style="left:401.50px;top:220.01px;font-size:6.6px;color:#e8e8e8;transform:scaleX(0.9918);">CH3 TD</span>
<span class="t" style="left:567.50px;top:220.01px;font-size:6.6px;color:#e8e8e8;transform:scaleX(0.9495);">CH1 Alexa Fluor 488, CH2 Alexa Fluor 568, CH3 TD</span>
<div class="a" style="left:366.60px;top:231.00px;width:93.70px;height:92.50px;background:#000;"></div>
<div class="a" style="left:592.80px;top:231.00px;width:93.10px;height:92.50px;background:#000;"></div>
<div class="a" style="left:298.30px;top:326.90px;width:451.70px;height:0.90px;background:#353535;"></div>
<span class="t" style="left:298.70px;top:327.41px;font-size:7.2px;color:#e4e4e4;transform:scaleX(0.8334);">Size:512x512</span>
<span class="t" style="left:339.90px;top:327.41px;font-size:7.2px;color:#e4e4e4;transform:scaleX(0.9047);">1.243[um/pixel]</span>
<span class="t" style="left:388.00px;top:327.41px;font-size:7.2px;color:#e4e4e4;transform:scaleX(0.8707);">x,y=(95,4)</span>
<span class="t" style="left:419.20px;top:327.41px;font-size:7.2px;color:#e4e4e4;transform:scaleX(0.8635);">Int.:0</span>
<div class="a" style="left:297.40px;top:338.00px;width:452.60px;height:0.90px;background:#3a3a3a;"></div>
<div class="a" style="left:297.40px;top:338.90px;width:452.60px;height:2.10px;background:#141414;"></div>
<div class="a" style="left:297.40px;top:341.00px;width:452.60px;height:0.90px;background:#3a3a3a;"></div>
<div class="a" style="left:297.40px;top:352.50px;width:452.60px;height:57.50px;background:#171717;"></div>
<div class="a" style="left:297.40px;top:341.90px;width:50.80px;height:10.30px;background:#1e1e1e;border-right:1px solid #454545;box-sizing:border-box;"></div>
<div class="a" style="left:348.20px;top:351.60px;width:401.80px;height:0.90px;background:#3a3a3a;"></div>
<svg class="a" style="left:298.7px;top:344.6px" width="6" height="6.4" viewBox="0 0 12 13"><path d="M2 1V9H10M5 3V6H8M9 9L11 12" stroke="#c8c8c8" stroke-width="1.5" fill="none"/></svg>
<span class="t" style="left:307.20px;top:343.87px;font-size:7px;color:#ececec;transform:scaleX(0.8907);">Live Graph</span>
<svg class="a" style="left:341px;top:346.3px" width="4.6" height="4.6" viewBox="0 0 10 10"><path d="M1 1L9 9M9 1L1 9" stroke="#fff" stroke-width="2.6"/></svg>
<div class="a" style="left:301.00px;top:356.20px;width:141.60px;height:53.80px;background:#111;border:1px solid #2e2e2e;box-sizing:border-box;"></div>
<div class="a" style="left:301.00px;top:356.20px;width:141.60px;height:10.60px;background:#1c1c1c;border:1px solid #2e2e2e;border-bottom:1px solid #3a3a3a;box-sizing:border-box;"></div>
<div class="a" style="left:301.00px;top:356.20px;width:22.00px;height:11.20px;background:#1c1c1c;border:1px solid #3f3f3f;border-bottom:none;box-sizing:border-box;border-radius:2px 2px 0 0;"></div>
<span class="t" style="left:305.80px;top:357.21px;font-size:7.2px;color:#ececec;transform:scaleX(0.8095);">Line</span>
<div class="a" style="left:302.00px;top:367.40px;width:139.60px;height:42.60px;background:linear-gradient(#161616,#0b0b0b);"></div>
<div class="a" style="left:303.20px;top:369.60px;width:60.40px;height:12.00px;background:linear-gradient(#404347,#36383c);"></div>
<span class="t" style="left:324.90px;top:371.21px;font-size:7.2px;color:#dcdcdc;transform:scaleX(0.8763);">Name</span>
<div class="a" style="left:364.90px;top:369.60px;width:24.80px;height:12.00px;background:linear-gradient(#404347,#36383c);"></div>
<span class="t" style="left:369.20px;top:371.21px;font-size:7.2px;color:#dcdcdc;transform:scaleX(0.9199);">Color</span>
<div class="a" style="left:391.00px;top:369.60px;width:33.60px;height:12.00px;background:linear-gradient(#404347,#36383c);"></div>
<span class="t" style="left:401.90px;top:371.21px;font-size:7.2px;color:#dcdcdc;transform:scaleX(0.8389);">Line</span>
<div class="a" style="left:425.90px;top:369.60px;width:14.10px;height:12.00px;background:linear-gradient(#404347,#36383c);overflow:hidden;"></div>
<div class="a" style="left:425.9px;top:369.6px;width:14.1px;height:12px;overflow:hidden;">
<span class="t" style="left:3.50px;top:1.61px;font-size:7.2px;color:#dcdcdc;transform:scaleX(0.9525);">Width</span>
</div>
<div class="a" style="left:444.60px;top:354.90px;width:238.80px;height:55.10px;background:#000;border:1px solid #2c2c2c;border-bottom:none;box-sizing:border-box;"></div>
<div class="a" style="left:478.20px;top:364.60px;width:1.00px;height:45.40px;background:#d8d8d8;"></div>
<div class="a" style="left:478.20px;top:364.40px;width:197.80px;height:0.80px;background:#8a8a8a;"></div>
<div class="a" style="left:675.20px;top:364.40px;width:0.90px;height:45.60px;background:#c8c8c8;"></div>
<span class="t" style="left:474.60px;top:358.10px;font-size:5.2px;color:#f0f0f0;transform:scaleX(0.6239);font-weight:bold;">1</span>
<span class="t" style="left:451.10px;top:394.43px;font-size:5.4px;color:#dcdcdc;transform:scaleX(0.9713);">Intensity</span>
<div class="a" style="left:690.40px;top:364.40px;width:69.60px;height:37.60px;background:transparent;border:1px solid #2e2e2e;box-sizing:border-box;border-radius:2px;"></div>
<div class="a" style="left:694.60px;top:360.00px;width:46.80px;height:9.00px;background:#171717;"></div>
<span class="t" style="left:696.20px;top:359.61px;font-size:7.2px;color:#e4e4e4;transform:scaleX(0.9193);">Horizontal Axis</span>
<div class="a" style="left:695.50px;top:371.20px;width:7.30px;height:7.30px;background:#505154;border-radius:1px;"></div>
<svg class="a" style="left:696px;top:371.6px" width="6.4" height="6.4" viewBox="0 0 12 12"><path d="M2 6L5 9.5L10.5 2" stroke="#fff" stroke-width="2" fill="none"/></svg>
<span class="t" style="left:707.00px;top:371.41px;font-size:7.2px;color:#e4e4e4;transform:scaleX(0.8860);">Auto</span>
<span class="t" style="left:695.50px;top:384.31px;font-size:7.2px;color:#e4e4e4;transform:scaleX(0.8796);">Time Range</span>
<div class="a" style="left:733.80px;top:384.70px;width:26.20px;height:8.70px;background:#2a2a2c;border-radius:2px;"></div>
<span class="t" style="left:739.60px;top:385.01px;font-size:6.6px;color:#555;transform:scaleX(1.0362);">000</span>
<div class="a" style="left:690.40px;top:405.40px;width:69.60px;height:14.60px;background:transparent;border:1px solid #303030;box-sizing:border-box;border-radius:2px;"></div>
<div class="a" style="left:694.60px;top:401.50px;width:37.80px;height:8.50px;background:#171717;"></div>
<span class="t" style="left:696.20px;top:401.81px;font-size:7.2px;color:#7c7c7c;transform:scaleX(0.8955);">Vertical Axis</span>
<div class="a" style="left:85.90px;top:115.00px;width:605.80px;height:77.70px;background:rgba(250,250,250,0.8);"></div>
<span class="t" style="left:124.30px;top:126.28px;font-size:24px;line-height:26.81px;height:auto;color:#0a0a0a;-webkit-text-stroke:0.3px #0a0a0a;transform:scaleX(0.9925);">Select</span>
<span class="t" style="left:199.00px;top:126.28px;font-size:24px;line-height:26.81px;height:auto;color:#0a0a0a;-webkit-text-stroke:0.3px #0a0a0a;transform:scaleX(1.0577);">[Line]</span>
<span class="t" style="left:269.10px;top:126.28px;font-size:24px;line-height:26.81px;height:auto;color:#0a0a0a;-webkit-text-stroke:0.3px #0a0a0a;transform:scaleX(1.1640);">for</span>
<span class="t" style="left:310.10px;top:126.28px;font-size:24px;line-height:26.81px;height:auto;color:#0a0a0a;-webkit-text-stroke:0.3px #0a0a0a;transform:scaleX(1.0525);">[Sequential</span>
<span class="t" style="left:445.30px;top:126.28px;font-size:24px;line-height:26.81px;height:auto;color:#0a0a0a;-webkit-text-stroke:0.3px #0a0a0a;transform:scaleX(1.0024);">scan]</span>
<span class="t" style="left:512.70px;top:126.28px;font-size:24px;line-height:26.81px;height:auto;color:#0a0a0a;-webkit-text-stroke:0.3px #0a0a0a;transform:scaleX(0.9957);">in</span>
<span class="t" style="left:541.20px;top:126.28px;font-size:24px;line-height:26.81px;height:auto;color:#0a0a0a;-webkit-text-stroke:0.3px #0a0a0a;transform:scaleX(1.0842);">[Detector]</span>
<span class="t" style="left:125.10px;top:155.08px;font-size:24px;line-height:26.81px;height:auto;color:#0a0a0a;-webkit-text-stroke:0.3px #0a0a0a;transform:scaleX(0.9583);">in</span>
<span class="t" style="left:151.80px;top:155.08px;font-size:24px;line-height:26.81px;height:auto;color:#0a0a0a;-webkit-text-stroke:0.3px #0a0a0a;transform:scaleX(1.0551);">the</span>
<span class="t" style="left:197.10px;top:155.08px;font-size:24px;line-height:26.81px;height:auto;color:#0a0a0a;-webkit-text-stroke:0.3px #0a0a0a;transform:scaleX(1.0742);">[Detector</span>
<span class="t" style="left:311.20px;top:155.08px;font-size:24px;line-height:26.81px;height:auto;color:#0a0a0a;-webkit-text-stroke:0.3px #0a0a0a;transform:scaleX(1.0751);">Setting]</span>
<span class="t" style="left:406.70px;top:155.08px;font-size:24px;line-height:26.81px;height:auto;color:#0a0a0a;-webkit-text-stroke:0.3px #0a0a0a;transform:scaleX(1.1009);">tool</span>
<span class="t" style="left:457.30px;top:155.08px;font-size:24px;line-height:26.81px;height:auto;color:#0a0a0a;-webkit-text-stroke:0.3px #0a0a0a;transform:scaleX(1.0951);">window.</span>
<svg class="a" style="left:111.3px;top:31.2px" width="10" height="13" viewBox="0 0 10 13"><path d="M1 1V10.4L3.4 8.3L5.2 12L7 11.2L5.2 7.7H8.2Z" fill="#fff" stroke="#0c0c0c" stroke-width="0.9" stroke-linejoin="round"/></svg>
</div></body></html>
